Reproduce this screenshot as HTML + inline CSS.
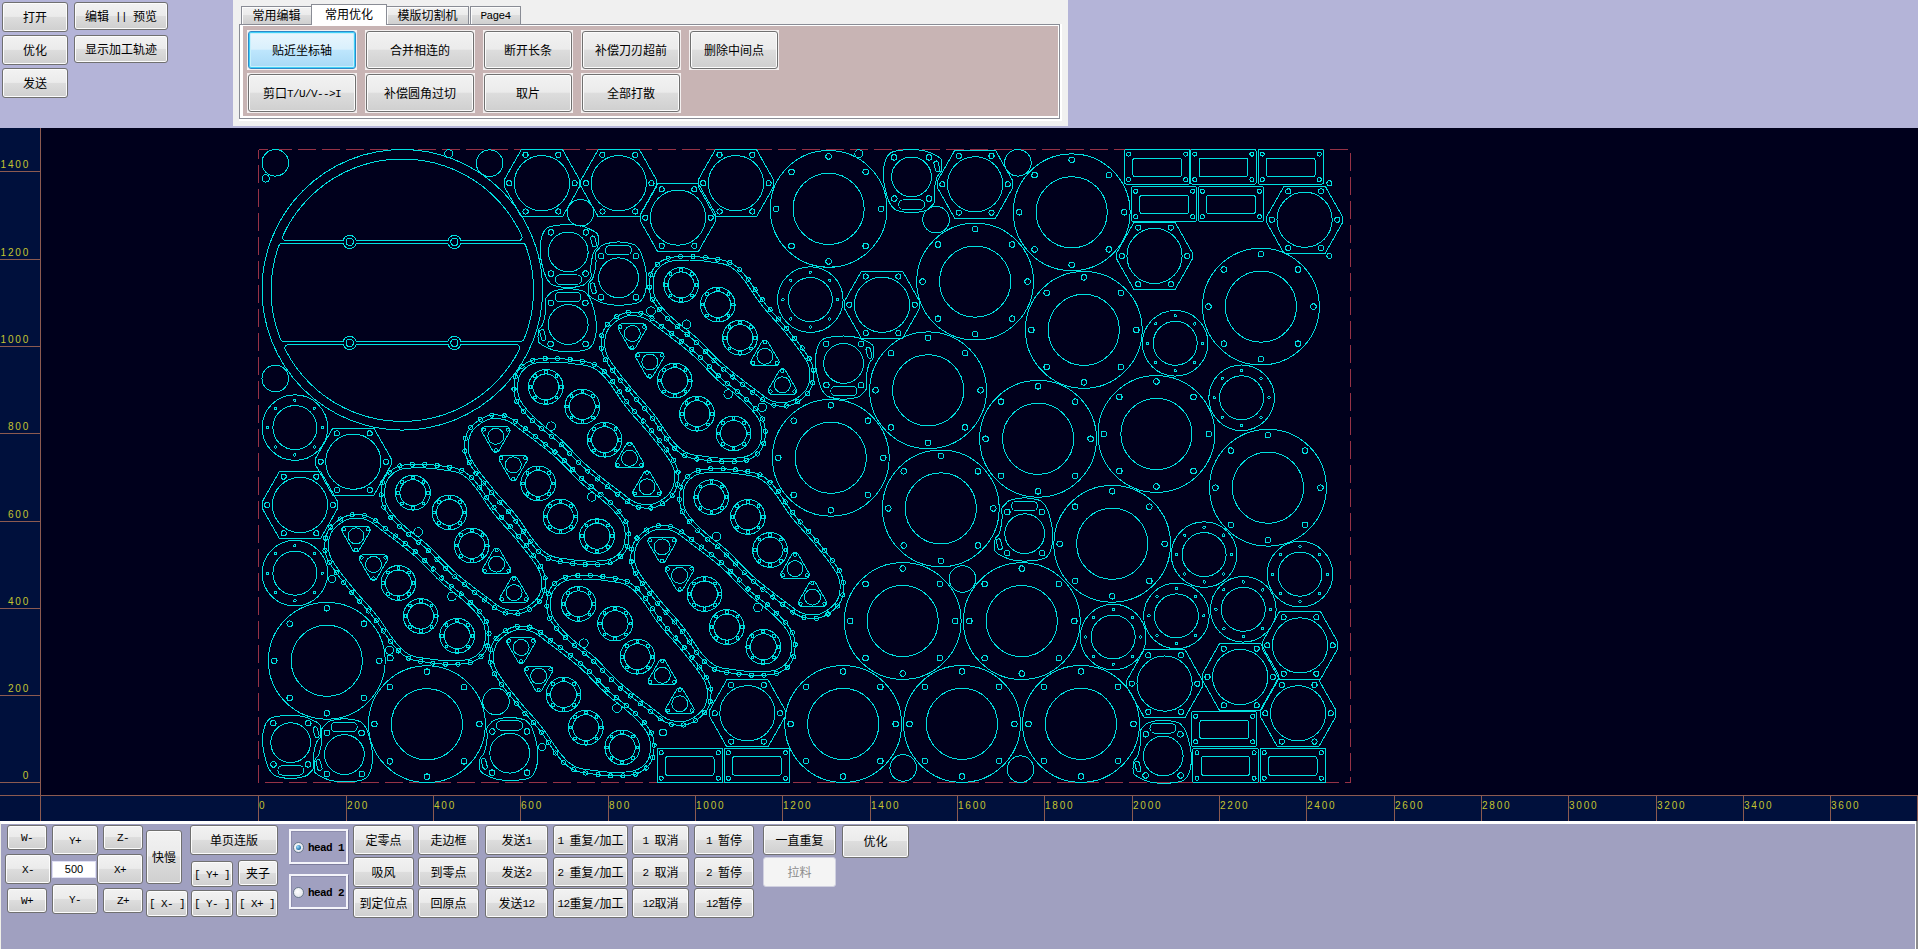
<!DOCTYPE html>
<html lang="zh"><head><meta charset="utf-8"><title>CAD</title>
<style>
*{box-sizing:border-box;margin:0;padding:0}
html,body{width:1918px;height:949px;overflow:hidden;background:#b4b4d8}
body{position:relative;font-family:"Liberation Serif","Noto Sans CJK SC","WenQuanYi Zen Hei",sans-serif;font-size:12px;color:#000}
.a{position:absolute}
.b{position:absolute;border:1px solid #707070;border-radius:3px;
 background:linear-gradient(#f2f2f2 0%,#ebebeb 48%,#dddddd 50%,#cfcfcf 100%);
 box-shadow:inset 0 0 0 1px #fcfcfc;display:flex;align-items:center;justify-content:center;white-space:pre;line-height:12px;padding-top:1px}
.b.sel{border-color:#2c89c8;background:linear-gradient(#eaf6fd 0%,#d9f0fc 48%,#bee6fd 50%,#a7d9f5 100%);box-shadow:inset 0 0 0 1px #40d0f8, inset 0 0 0 2px #c8f0fc}
.b.dis{border-color:#d0d0e0;background:#f4f4f4;color:#8c8c8c;box-shadow:none}
.fr{position:absolute;background:#f4f0f0}
.tab{position:absolute;border:1px solid #898c95;border-bottom:none;background:linear-gradient(#f2f2f2 0%,#ebebeb 48%,#dddddd 50%,#cfcfcf 100%);display:flex;align-items:center;justify-content:center;white-space:pre;line-height:12px;box-shadow:inset 1px 1px 0 #fcfcfc;padding-top:1px}
.tab.on{background:#fff;box-shadow:none}
.rl{position:absolute;font-family:"Liberation Sans",sans-serif;font-size:10px;line-height:10px;color:#c4c430;letter-spacing:1.8px;white-space:pre}
.lat{font-family:"Liberation Mono",monospace;font-size:11px;letter-spacing:-0.6px}
</style></head>
<body>
<div class="b " style="left:2px;top:2px;width:66px;height:30px;">打开</div>
<div class="b " style="left:2px;top:35px;width:66px;height:30px;">优化</div>
<div class="b " style="left:2px;top:68px;width:66px;height:30px;">发送</div>
<div class="b " style="left:74px;top:2px;width:94px;height:28px;">编辑<span class="lat"> || </span>预览</div>
<div class="b " style="left:74px;top:35px;width:94px;height:28px;">显示加工轨迹</div>
<div class="a" style="left:233px;top:0;width:835px;height:126px;background:#f0f0f0"></div>
<div class="a" style="left:239px;top:24px;width:823px;height:97px;background:#fff"></div>
<div class="a" style="left:239px;top:24px;width:821px;height:95px;border:1px solid #898c95;background:#fff"></div>
<div class="a" style="left:243px;top:26px;width:815px;height:90px;background:#c8b4b4"></div>
<div class="tab" style="left:241px;top:6px;width:71px;height:18px">常用编辑</div>
<div class="tab" style="left:386px;top:6px;width:83px;height:18px">模版切割机</div>
<div class="tab" style="left:470px;top:6px;width:51px;height:18px"><span class="lat">Page4</span></div>
<div class="tab on" style="left:311px;top:4px;width:76px;height:21px;padding-bottom:1px">常用优化</div>
<div class="fr" style="left:247px;top:30px;width:110px;height:40px"></div>
<div class="b sel" style="left:248px;top:31px;width:108px;height:38px;">贴近坐标轴</div>
<div class="fr" style="left:365px;top:30px;width:110px;height:40px"></div>
<div class="b " style="left:366px;top:31px;width:108px;height:38px;">合并相连的</div>
<div class="fr" style="left:483px;top:30px;width:90px;height:40px"></div>
<div class="b " style="left:484px;top:31px;width:88px;height:38px;">断开长条</div>
<div class="fr" style="left:581px;top:30px;width:100px;height:40px"></div>
<div class="b " style="left:582px;top:31px;width:98px;height:38px;">补偿刀刃超前</div>
<div class="fr" style="left:689px;top:30px;width:90px;height:40px"></div>
<div class="b " style="left:690px;top:31px;width:88px;height:38px;">删除中间点</div>
<div class="fr" style="left:247px;top:73px;width:110px;height:40px"></div>
<div class="b " style="left:248px;top:74px;width:108px;height:38px;">剪口<span class="lat">T/U/V--&gt;I</span></div>
<div class="fr" style="left:365px;top:73px;width:110px;height:40px"></div>
<div class="b " style="left:366px;top:74px;width:108px;height:38px;">补偿圆角过切</div>
<div class="fr" style="left:483px;top:73px;width:90px;height:40px"></div>
<div class="b " style="left:484px;top:74px;width:88px;height:38px;">取片</div>
<div class="fr" style="left:581px;top:73px;width:100px;height:40px"></div>
<div class="b " style="left:582px;top:74px;width:98px;height:38px;">全部打散</div>
<div class="a" style="left:0;top:128px;width:1918px;height:693px;background:#00001c"></div>
<div class="a" style="left:0;top:128px;width:41px;height:693px;background:#00103c;border-right:1px solid #8c5a50"></div>
<div class="a" style="left:0;top:795px;width:1918px;height:26px;background:#00103c;border-top:1px solid #8c5a50"></div>
<div class="a" style="left:40px;top:795px;width:1px;height:26px;background:#8c5a50"></div>
<div class="a" style="left:0;top:782px;width:40px;height:1px;background:#8c5a50"></div>
<div class="rl" style="right:1888px;top:771px;text-align:right">0</div>
<div class="a" style="left:0;top:695px;width:40px;height:1px;background:#8c5a50"></div>
<div class="rl" style="right:1888px;top:684px;text-align:right">200</div>
<div class="a" style="left:0;top:608px;width:40px;height:1px;background:#8c5a50"></div>
<div class="rl" style="right:1888px;top:597px;text-align:right">400</div>
<div class="a" style="left:0;top:521px;width:40px;height:1px;background:#8c5a50"></div>
<div class="rl" style="right:1888px;top:510px;text-align:right">600</div>
<div class="a" style="left:0;top:433px;width:40px;height:1px;background:#8c5a50"></div>
<div class="rl" style="right:1888px;top:422px;text-align:right">800</div>
<div class="a" style="left:0;top:346px;width:40px;height:1px;background:#8c5a50"></div>
<div class="rl" style="right:1888px;top:335px;text-align:right">1000</div>
<div class="a" style="left:0;top:259px;width:40px;height:1px;background:#8c5a50"></div>
<div class="rl" style="right:1888px;top:248px;text-align:right">1200</div>
<div class="a" style="left:0;top:171px;width:40px;height:1px;background:#8c5a50"></div>
<div class="rl" style="right:1888px;top:160px;text-align:right">1400</div>
<div class="a" style="left:258px;top:796px;width:1px;height:25px;background:#8c5a50"></div>
<div class="rl" style="left:259px;top:801px">0</div>
<div class="a" style="left:346px;top:796px;width:1px;height:25px;background:#8c5a50"></div>
<div class="rl" style="left:347px;top:801px">200</div>
<div class="a" style="left:433px;top:796px;width:1px;height:25px;background:#8c5a50"></div>
<div class="rl" style="left:434px;top:801px">400</div>
<div class="a" style="left:520px;top:796px;width:1px;height:25px;background:#8c5a50"></div>
<div class="rl" style="left:521px;top:801px">600</div>
<div class="a" style="left:608px;top:796px;width:1px;height:25px;background:#8c5a50"></div>
<div class="rl" style="left:609px;top:801px">800</div>
<div class="a" style="left:695px;top:796px;width:1px;height:25px;background:#8c5a50"></div>
<div class="rl" style="left:696px;top:801px">1000</div>
<div class="a" style="left:782px;top:796px;width:1px;height:25px;background:#8c5a50"></div>
<div class="rl" style="left:783px;top:801px">1200</div>
<div class="a" style="left:870px;top:796px;width:1px;height:25px;background:#8c5a50"></div>
<div class="rl" style="left:871px;top:801px">1400</div>
<div class="a" style="left:957px;top:796px;width:1px;height:25px;background:#8c5a50"></div>
<div class="rl" style="left:958px;top:801px">1600</div>
<div class="a" style="left:1044px;top:796px;width:1px;height:25px;background:#8c5a50"></div>
<div class="rl" style="left:1045px;top:801px">1800</div>
<div class="a" style="left:1132px;top:796px;width:1px;height:25px;background:#8c5a50"></div>
<div class="rl" style="left:1133px;top:801px">2000</div>
<div class="a" style="left:1219px;top:796px;width:1px;height:25px;background:#8c5a50"></div>
<div class="rl" style="left:1220px;top:801px">2200</div>
<div class="a" style="left:1306px;top:796px;width:1px;height:25px;background:#8c5a50"></div>
<div class="rl" style="left:1307px;top:801px">2400</div>
<div class="a" style="left:1394px;top:796px;width:1px;height:25px;background:#8c5a50"></div>
<div class="rl" style="left:1395px;top:801px">2600</div>
<div class="a" style="left:1481px;top:796px;width:1px;height:25px;background:#8c5a50"></div>
<div class="rl" style="left:1482px;top:801px">2800</div>
<div class="a" style="left:1568px;top:796px;width:1px;height:25px;background:#8c5a50"></div>
<div class="rl" style="left:1569px;top:801px">3000</div>
<div class="a" style="left:1656px;top:796px;width:1px;height:25px;background:#8c5a50"></div>
<div class="rl" style="left:1657px;top:801px">3200</div>
<div class="a" style="left:1743px;top:796px;width:1px;height:25px;background:#8c5a50"></div>
<div class="rl" style="left:1744px;top:801px">3400</div>
<div class="a" style="left:1830px;top:796px;width:1px;height:25px;background:#8c5a50"></div>
<div class="rl" style="left:1831px;top:801px">3600</div>
<svg class="a" style="left:0;top:0" width="1918" height="949" viewBox="0 0 1918 949">
<defs>
<g id="hex"><path d="M37.9 -3 L37.9 3 L20.5 33.7 L-20.5 33.7 L-37.9 3 L-37.9 -3 L-20.5 -33.7 L20.5 -33.7Z"/><circle cx="0" cy="0" r="27.6"/><circle cx="32.7" cy="0" r="2.6"/><circle cx="16.4" cy="28.3" r="2.6"/><circle cx="-16.3" cy="28.3" r="2.6"/><circle cx="-32.7" cy="0" r="2.6"/><circle cx="-16.4" cy="-28.3" r="2.6"/><circle cx="16.4" cy="-28.3" r="2.6"/></g>
<g id="ear"><path d="M-28.2 -1 L-28.2 -5.3 L-27.7 -9.3 L-27 -13 L-26 -16.4 L-24.7 -19.5 L-23 -22 L-21.2 -23.7 L-19.1 -24.9 L-16 -25.8 L-11.3 -26.6 L-5.5 -27.2 L0 -27.4 L5 -27.2 L9.8 -26.6 L14 -25.8 L17.5 -24.6 L20.5 -23.3 L23 -22 L24.9 -21.1 L26.3 -20.4 L27.5 -19.5 L28.6 -18.6 L29.5 -17.6 L30 -15.8 L30.2 -12.6 L30.1 -8.8 L29.6 -5.5 L28.6 -3.7 L27.2 -2.5 L26 -0.8 L25 1.8 L24.2 4.9 L23.5 8 L23 11 L22.7 14.1 L22.5 17 L22.7 19.9 L23 22.6 L22.9 25 L22 26.9 L20.5 28.5 L19 30 L17.8 31.4 L16.5 32.5 L14.2 33.6 L10.2 34.6 L5.1 35.5 L0 35.9 L-5.1 35.5 L-10.2 34.6 L-14.2 33.6 L-16.5 32.6 L-17.8 31.4 L-19 30 L-20.3 28.5 L-21.4 26.8 L-22.5 24.5 L-23.7 21.3 L-24.9 17.6 L-26 13.4 L-27 8.8 L-27.8 3.7Z"/><circle cx="0" cy="0" r="19.9"/><circle cx="-17.4" cy="-19.5" r="2.8"/><circle cx="17.6" cy="-19.5" r="2.8"/><circle cx="-17.2" cy="21.7" r="2.8"/><circle cx="17.4" cy="21.7" r="2.8"/><rect x="-12.8" y="23" width="26" height="9.4" rx="4.5"/><rect x="23.2" y="-16" width="4.4" height="11" rx="2.2" transform="rotate(-14 25.4 -10.5)"/></g>
<g id="sfl"><circle cx="0" cy="0" r="32.8"/><circle cx="0" cy="0" r="22"/><circle cx="27.4" cy="0" r="1.2"/><circle cx="19.4" cy="19.4" r="1.2"/><circle cx="0" cy="27.4" r="1.2"/><circle cx="-19.4" cy="19.4" r="1.2"/><circle cx="-27.4" cy="0" r="1.2"/><circle cx="-19.4" cy="-19.4" r="1.2"/><circle cx="0" cy="-27.4" r="1.2"/><circle cx="19.4" cy="-19.4" r="1.2"/></g>
<g id="r8"><circle cx="0" cy="0" r="58.4"/><circle cx="0" cy="0" r="35.6"/><circle cx="0" cy="52.5" r="2.8"/><circle cx="-37.1" cy="37.1" r="2.8"/><circle cx="-52.5" cy="0" r="2.8"/><circle cx="-37.1" cy="-37.1" r="2.8"/><circle cx="0" cy="-52.5" r="2.8"/><circle cx="37.1" cy="-37.1" r="2.8"/><circle cx="52.5" cy="0" r="2.8"/><circle cx="37.1" cy="37.1" r="2.8"/></g>
<g id="rg"><rect x="0" y="0" width="65.5" height="34.5" rx="1.5"/><rect x="8.5" y="8.5" width="48.5" height="18.5" rx="2"/><circle cx="4.2" cy="4.5" r="2"/><circle cx="61.3" cy="4.5" r="2"/><circle cx="4.2" cy="30" r="2"/><circle cx="61.3" cy="30" r="2"/></g>
<g id="ring"><circle cx="0" cy="0" r="17.4"/><circle cx="0" cy="0" r="13"/><rect x="-1.3" y="13.9" width="2.6" height="2.6"/><rect x="-12" y="9.4" width="2.6" height="2.6"/><rect x="-16.5" y="-1.3" width="2.6" height="2.6"/><rect x="-12" y="-12" width="2.6" height="2.6"/><rect x="-1.3" y="-16.5" width="2.6" height="2.6"/><rect x="9.4" y="-12" width="2.6" height="2.6"/><rect x="13.9" y="-1.3" width="2.6" height="2.6"/><rect x="9.4" y="9.4" width="2.6" height="2.6"/></g>
<g id="tri"><path d="M3.1 -14 L2.1 -15.1 L0.7 -15.7 L-0.7 -15.7 L-2.1 -15.1 L-3.1 -14 L-13.8 4.5 L-14.3 5.9 L-14.1 7.4 L-13.4 8.7 L-12.2 9.6 L-10.7 9.9 L10.7 9.9 L12.2 9.6 L13.4 8.7 L14.1 7.4 L14.3 5.9 L13.8 4.5Z"/><circle cx="0" cy="0.3" r="8"/><circle cx="0" cy="-13.6" r="1.6"/><circle cx="11.9" cy="7" r="1.6"/><circle cx="-11.9" cy="7" r="1.6"/></g>
<g id="cg"><path d="M-82.2 -53.8 L-81.8 -56.2 L-81.4 -58.5 L-80.8 -60.7 L-80 -62.8 L-79 -64.9 L-77.7 -66.8 L-76.1 -68.7 L-74.3 -70.5 L-72.2 -72.2 L-70 -73.8 L-67.4 -75.2 L-64.7 -76.3 L-61.5 -77.1 L-58 -77.7 L-54.2 -78 L-50.3 -78.2 L-46.4 -78.3 L-42.6 -78.3 L-38.9 -78.2 L-35.2 -78 L-31.4 -77.7 L-27.7 -77.3 L-24.1 -76.8 L-20.6 -76.3 L-17.3 -75.8 L-14 -75.4 L-10.9 -74.9 L-7.8 -74.3 L-4.8 -73.4 L-1.9 -72.2 L0.7 -70.8 L3.2 -69.2 L5.5 -67.3 L7.8 -65.2 L10.3 -62.6 L13.1 -59.5 L16 -55.7 L19.1 -51.3 L22.4 -46.5 L25.8 -41.4 L29.2 -36.4 L32.8 -31.7 L36.4 -27.2 L40.3 -22.8 L44.3 -18.3 L48.3 -13.9 L52.2 -9.5 L55.9 -5 L59.8 -0.3 L63.7 4.6 L67.5 9.5 L71.1 14.3 L74.3 18.8 L76.8 22.8 L78.7 26.3 L80.1 29.4 L81 32.1 L81.5 34.8 L81.8 37.4 L81.8 40.2 L81.7 43.2 L81.4 46.2 L80.8 49.2 L79.8 52.1 L78.5 55 L76.8 57.6 L74.7 60.1 L72 62.7 L69 65.1 L65.8 67.2 L62.6 69 L59.4 70.3 L56.1 71.1 L52.8 71.5 L49.4 71.5 L46 71.2 L42.6 70.6 L39.4 69.7 L36.4 68.5 L33.7 67 L31 65.2 L28.2 63.1 L25 60.5 L21.1 57.6 L16.5 54.1 L11.1 50.1 L5.4 45.7 L-0.4 41.1 L-6.1 36.5 L-11.2 32.1 L-16 27.7 L-20.5 23.2 L-24.9 18.7 L-29 14.3 L-33 10.2 L-36.8 6.6 L-40.3 3.5 L-43.6 0.8 L-46.7 -1.6 L-49.6 -3.9 L-52.5 -6.1 L-55.4 -8.5 L-58.2 -10.9 L-60.9 -13.3 L-63.5 -15.7 L-66.1 -18 L-68.4 -20.4 L-70.7 -22.8 L-72.7 -25.2 L-74.7 -27.7 L-76.5 -30.2 L-78.1 -32.7 L-79.5 -35.2 L-80.7 -37.8 L-81.5 -40.4 L-82 -43.2 L-82.3 -45.9 L-82.4 -48.7 L-82.3 -51.3Z"/><path d="M-78.6 -53.4 L-78.7 -51.1 L-78.8 -48.7 L-78.7 -46.2 L-78.4 -43.7 L-78 -41.3 L-77.3 -39 L-76.3 -36.8 L-75.1 -34.6 L-73.6 -32.2 L-71.8 -29.9 L-69.9 -27.5 L-67.9 -25.2 L-65.8 -22.9 L-63.6 -20.6 L-61.1 -18.3 L-58.5 -16 L-55.8 -13.6 L-53 -11.2 L-50.3 -9 L-47.5 -6.8 L-44.5 -4.5 L-44.5 -4.5 L-41.4 -2.1 L-41.3 -2 L-38 0.7 L-37.9 0.8 L-34.4 3.9 L-34.2 4 L-30.5 7.7 L-30.4 7.7 L-26.4 11.8 L-26.4 11.8 L-22.3 16.2 L-17.9 20.7 L-13.5 25.1 L-8.9 29.4 L-3.8 33.7 L1.8 38.3 L7.6 42.8 L13.3 47.2 L18.7 51.2 L23.3 54.7 L23.3 54.7 L27.2 57.7 L27.2 57.7 L30.4 60.2 L33.1 62.3 L35.6 63.9 L37.9 65.2 L40.5 66.3 L43.4 67.1 L46.5 67.7 L49.5 67.9 L52.6 67.9 L55.5 67.6 L58.2 66.9 L61 65.7 L64 64.1 L66.9 62.2 L69.7 60 L72.1 57.7 L73.9 55.5 L75.4 53.2 L76.4 50.8 L77.3 48.3 L77.8 45.6 L78.1 42.9 L78.2 40.2 L78.2 37.6 L77.9 35.3 L77.5 33.1 L76.7 30.7 L75.5 27.9 L73.7 24.6 L71.3 20.8 L68.2 16.4 L64.7 11.7 L60.9 6.8 L56.9 2 L53.2 -2.7 L49.4 -7.2 L45.6 -11.5 L41.6 -15.9 L41.6 -15.9 L37.6 -20.4 L37.6 -20.4 L33.7 -24.8 L33.7 -24.9 L30 -29.4 L29.9 -29.5 L26.3 -34.3 L26.2 -34.4 L22.8 -39.4 L22.8 -39.4 L19.4 -44.5 L16.2 -49.3 L13.1 -53.6 L10.3 -57.2 L7.7 -60.1 L5.3 -62.6 L3.2 -64.6 L1.1 -66.2 L-1.1 -67.7 L-3.5 -69 L-6 -70 L-8.7 -70.8 L-11.5 -71.4 L-14.5 -71.8 L-17.8 -72.3 L-17.8 -72.3 L-21.1 -72.7 L-21.2 -72.7 L-24.6 -73.2 L-28.2 -73.7 L-31.8 -74.1 L-35.5 -74.4 L-39.1 -74.6 L-42.7 -74.7 L-46.4 -74.7 L-50.2 -74.6 L-54 -74.4 L-57.5 -74.1 L-60.8 -73.6 L-63.5 -72.9 L-65.9 -71.9 L-68.1 -70.7 L-70 -69.4 L-71.8 -67.9 L-73.4 -66.3 L-74.8 -64.6 L-75.9 -63 L-76.7 -61.4 L-77.4 -59.6 L-77.9 -57.7 L-78.3 -55.6Z"/><circle cx="-81" cy="-59.9" r="2.1"/><circle cx="-74.4" cy="-70.4" r="2.1"/><circle cx="-63.7" cy="-76.5" r="2.1"/><circle cx="-51.3" cy="-78.2" r="2.1"/><circle cx="-38.8" cy="-78.2" r="2.1"/><circle cx="-26.3" cy="-77.1" r="2.1"/><circle cx="-14" cy="-75.4" r="2.1"/><circle cx="-1.9" cy="-72.2" r="2.1"/><circle cx="8.1" cy="-64.9" r="2.1"/><circle cx="16.3" cy="-55.4" r="2.1"/><circle cx="23.3" cy="-45" r="2.1"/><circle cx="30.5" cy="-34.8" r="2.1"/><circle cx="38.3" cy="-25" r="2.1"/><circle cx="46.7" cy="-15.7" r="2.1"/><circle cx="54.9" cy="-6.3" r="2.1"/><circle cx="62.8" cy="3.4" r="2.1"/><circle cx="70.4" cy="13.3" r="2.1"/><circle cx="77.3" cy="23.7" r="2.1"/><circle cx="81.6" cy="35.4" r="2.1"/><circle cx="81" cy="47.9" r="2.1"/><circle cx="75.7" cy="59" r="2.1"/><circle cx="66.1" cy="67" r="2.1"/><circle cx="54.5" cy="71.3" r="2.1"/><circle cx="42.1" cy="70.5" r="2.1"/><circle cx="30.9" cy="65.1" r="2.1"/><circle cx="21" cy="57.5" r="2.1"/><circle cx="11" cy="50" r="2.1"/><circle cx="1.1" cy="42.3" r="2.1"/><circle cx="-8.6" cy="34.4" r="2.1"/><circle cx="-17.8" cy="25.9" r="2.1"/><circle cx="-26.5" cy="17" r="2.1"/><circle cx="-35.3" cy="8" r="2.1"/><circle cx="-44.7" cy="-0.1" r="2.1"/><circle cx="-54.6" cy="-7.9" r="2.1"/><circle cx="-64" cy="-16.1" r="2.1"/><circle cx="-72.6" cy="-25.1" r="2.1"/><circle cx="-79.6" cy="-35.4" r="2.1"/><circle cx="-82.4" cy="-47.6" r="2.1"/><circle cx="-45.3" cy="-10.5" r="4.3"/><use href="#ring" x="-50.6" y="-49.8"/><use href="#ring" x="-14.1" y="-30.1"/><use href="#ring" x="8.2" y="3"/><use href="#tri" x="33.1" y="21.3"/><use href="#tri" x="50.6" y="49.8"/></g>
</defs>
<g fill="none" stroke="#963246" stroke-width="1" stroke-dasharray="18 6" stroke-dashoffset="9" shape-rendering="crispEdges"><path d="M258.5 149.5H1350.5V782.5"/><path d="M258.5 149.5V782.5H1350.5"/></g>
<g fill="none" stroke="#00e0e0" stroke-width="1" shape-rendering="crispEdges">
<circle cx="402.3" cy="289.8" r="140.3"/>
<path d="M283 239 L283.4 239.6 L284 240 L284.7 240.3 L285.5 240.4 L343.3 240.4 L343.3 240.2 L344 238.6 L345 237.2 L346.4 236.2 L348 235.5 L349.7 235.3 L351.4 235.5 L353 236.2 L354.4 237.2 L355.4 238.6 L356.1 240.2 L356.1 240.4 L448 240.4 L448 240.2 L448.7 238.6 L449.7 237.2 L451.1 236.2 L452.7 235.5 L454.4 235.3 L456.1 235.5 L457.7 236.2 L459.1 237.2 L460.1 238.6 L460.8 240.2 L460.8 240.4 L519.1 240.4 L519.9 240.3 L520.6 240 L521.2 239.6 L521.6 239 L522 238.3 L522.1 237.6 L522.1 236.9 L521.8 236.2 L520.9 234.1 L520.9 234.1 L519.5 231.2 L519.5 231.2 L518 228.4 L518 228.3 L516.5 225.6 L516.4 225.5 L514.9 222.8 L514.8 222.7 L513.2 220 L513.1 220 L511.4 217.3 L511.4 217.3 L509.6 214.7 L509.5 214.6 L507.7 212.1 L507.7 212 L505.8 209.5 L505.7 209.5 L503.7 207 L503.7 206.9 L501.7 204.5 L501.6 204.5 L499.5 202.1 L499.5 202.1 L497.3 199.8 L497.3 199.7 L495.1 197.5 L495 197.4 L492.8 195.2 L492.7 195.2 L490.4 193 L490.4 193 L488 190.9 L488 190.8 L485.6 188.8 L485.5 188.8 L483 186.8 L483 186.7 L480.5 184.8 L480.4 184.8 L477.9 183 L477.8 182.9 L475.2 181.1 L475.2 181.1 L472.5 179.4 L472.5 179.3 L469.8 177.7 L469.7 177.6 L467 176.1 L466.9 176 L464.2 174.5 L464.1 174.5 L461.3 173 L461.3 173 L458.4 171.6 L458.4 171.6 L455.5 170.3 L455.4 170.2 L452.5 169 L452.5 169 L449.6 167.8 L449.5 167.8 L446.5 166.7 L446.5 166.7 L443.5 165.6 L443.4 165.6 L440.4 164.7 L440.3 164.6 L437.3 163.8 L437.3 163.7 L434.2 162.9 L434.1 162.9 L431.1 162.2 L431 162.2 L427.9 161.5 L427.9 161.5 L424.8 160.9 L424.7 160.9 L421.6 160.4 L421.5 160.4 L418.4 160 L418.3 160 L415.2 159.6 L415.1 159.6 L412 159.4 L411.9 159.4 L408.8 159.2 L408.7 159.2 L405.6 159 L405.5 159 L402.3 159 L402.3 159 L399.1 159 L399 159 L395.9 159.2 L395.8 159.2 L392.7 159.4 L392.6 159.4 L389.5 159.6 L389.4 159.6 L386.3 160 L386.2 160 L383.1 160.4 L383 160.4 L379.9 160.9 L379.8 160.9 L376.7 161.5 L376.7 161.5 L373.6 162.2 L373.5 162.2 L370.5 162.9 L370.4 162.9 L367.3 163.7 L367.3 163.8 L364.3 164.6 L364.2 164.7 L361.2 165.6 L361.1 165.6 L358.1 166.7 L358.1 166.7 L355.1 167.8 L355 167.8 L352.1 169 L352.1 169 L349.2 170.2 L349.1 170.3 L346.2 171.6 L346.2 171.6 L343.3 173 L343.3 173 L340.5 174.5 L340.4 174.5 L337.7 176 L337.6 176.1 L334.9 177.6 L334.8 177.7 L332.1 179.3 L332.1 179.4 L329.4 181.1 L329.4 181.1 L326.8 182.9 L326.7 183 L324.2 184.8 L324.1 184.8 L321.6 186.7 L321.6 186.8 L319.1 188.8 L319 188.8 L316.6 190.8 L316.6 190.9 L314.2 193 L314.2 193 L311.9 195.2 L311.8 195.2 L309.6 197.4 L309.5 197.5 L307.3 199.7 L307.3 199.8 L305.1 202.1 L305.1 202.1 L303 204.5 L302.9 204.5 L300.9 206.9 L300.9 207 L298.9 209.5 L298.8 209.5 L296.9 212 L296.9 212.1 L295.1 214.6 L295 214.7 L293.2 217.3 L293.2 217.3 L291.5 220 L291.4 220 L289.8 222.7 L289.7 222.8 L288.2 225.5 L288.1 225.6 L286.6 228.3 L286.6 228.4 L285.1 231.2 L285.1 231.2 L283.7 234.1 L283.7 234.1 L282.8 236.2 L282.5 236.9 L282.5 237.6 L282.6 238.3Z"/>
<path d="M282.7 341.1 L283.4 341.2 L343.3 341.2 L343.3 341.2 L344 339.6 L345 338.2 L346.4 337.2 L348 336.5 L349.7 336.3 L351.4 336.5 L353 337.2 L354.4 338.2 L355.4 339.6 L356.1 341.2 L356.1 341.2 L448 341.2 L448 341.2 L448.7 339.6 L449.7 338.2 L451.1 337.2 L452.7 336.5 L454.4 336.3 L456.1 336.5 L457.7 337.2 L459.1 338.2 L460.1 339.6 L460.8 341.2 L460.8 341.2 L521.2 341.2 L521.9 341.1 L522.5 340.9 L523.1 340.5 L523.6 339.9 L524 339.3 L524.7 337.5 L524.7 337.4 L525.8 334.4 L525.8 334.4 L526.9 331.4 L526.9 331.3 L527.8 328.3 L527.9 328.2 L528.7 325.2 L528.8 325.2 L529.6 322.1 L529.6 322 L530.3 319 L530.3 318.9 L531 315.8 L531 315.8 L531.6 312.7 L531.6 312.6 L532.1 309.5 L532.1 309.4 L532.5 306.3 L532.5 306.2 L532.9 303.1 L532.9 303 L533.1 299.9 L533.1 299.8 L533.3 296.7 L533.3 296.6 L533.5 293.5 L533.5 293.4 L533.5 290.2 L533.5 290.2 L533.5 287 L533.5 286.9 L533.3 283.8 L533.3 283.7 L533.1 280.6 L533.1 280.5 L532.9 277.4 L532.9 277.3 L532.5 274.2 L532.5 274.1 L532.1 271 L532.1 270.9 L531.6 267.8 L531.6 267.7 L531 264.6 L531 264.6 L530.3 261.5 L530.3 261.4 L529.6 258.4 L529.6 258.3 L528.8 255.2 L528.7 255.2 L527.9 252.2 L527.8 252.1 L526.9 249.1 L526.9 249 L525.8 246 L525.8 246 L525.7 245.6 L525.3 244.9 L524.9 244.4 L524.3 243.9 L523.6 243.7 L522.9 243.6 L460.8 243.6 L460.8 243.6 L460.1 245.2 L459.1 246.6 L457.7 247.6 L456.1 248.3 L454.4 248.5 L452.7 248.3 L451.1 247.6 L449.7 246.6 L448.7 245.2 L448 243.6 L448 243.6 L356.1 243.6 L356.1 243.6 L355.4 245.2 L354.4 246.6 L353 247.6 L351.4 248.3 L349.7 248.5 L348 248.3 L346.4 247.6 L345 246.6 L344 245.2 L343.3 243.6 L343.3 243.6 L281.7 243.6 L281 243.7 L280.3 243.9 L279.7 244.4 L279.3 244.9 L278.9 245.6 L278.8 246 L278.8 246 L277.7 249 L277.7 249.1 L276.8 252.1 L276.7 252.2 L275.9 255.2 L275.8 255.2 L275 258.3 L275 258.4 L274.3 261.4 L274.3 261.5 L273.6 264.6 L273.6 264.6 L273 267.7 L273 267.8 L272.5 270.9 L272.5 271 L272.1 274.1 L272.1 274.2 L271.7 277.3 L271.7 277.4 L271.5 280.5 L271.5 280.6 L271.3 283.7 L271.3 283.8 L271.1 286.9 L271.1 287 L271.1 290.2 L271.1 290.2 L271.1 293.4 L271.1 293.5 L271.3 296.6 L271.3 296.7 L271.5 299.8 L271.5 299.9 L271.7 303 L271.7 303.1 L272.1 306.2 L272.1 306.3 L272.5 309.4 L272.5 309.5 L273 312.6 L273 312.7 L273.6 315.8 L273.6 315.8 L274.3 318.9 L274.3 319 L275 322 L275 322.1 L275.8 325.2 L275.9 325.2 L276.7 328.2 L276.8 328.3 L277.7 331.3 L277.7 331.4 L278.8 334.4 L278.8 334.4 L279.9 337.4 L279.9 337.5 L280.6 339.3 L281 339.9 L281.5 340.5 L282.1 340.9Z"/>
<path d="M285.2 346.2 L284.9 346.9 L284.8 347.6 L284.8 348.4 L285.1 349.1 L285.1 349.2 L285.1 349.2 L286.6 352 L286.6 352.1 L288.1 354.8 L288.2 354.9 L289.7 357.6 L289.8 357.7 L291.4 360.4 L291.5 360.4 L293.2 363.1 L293.2 363.1 L295 365.7 L295.1 365.8 L296.9 368.3 L296.9 368.4 L298.8 370.9 L298.9 370.9 L300.9 373.4 L300.9 373.5 L302.9 375.9 L303 375.9 L305.1 378.3 L305.1 378.3 L307.3 380.6 L307.3 380.7 L309.5 382.9 L309.6 383 L311.8 385.2 L311.9 385.2 L314.2 387.4 L314.2 387.4 L316.6 389.5 L316.6 389.6 L319 391.6 L319.1 391.6 L321.6 393.6 L321.6 393.7 L324.1 395.6 L324.2 395.6 L326.7 397.4 L326.8 397.5 L329.4 399.3 L329.4 399.3 L332.1 401 L332.1 401.1 L334.8 402.7 L334.9 402.8 L337.6 404.3 L337.7 404.4 L340.4 405.9 L340.5 405.9 L343.3 407.4 L343.3 407.4 L346.2 408.8 L346.2 408.8 L349.1 410.1 L349.2 410.2 L352.1 411.4 L352.1 411.4 L355 412.6 L355.1 412.6 L358.1 413.7 L358.1 413.7 L361.1 414.8 L361.2 414.8 L364.2 415.7 L364.3 415.8 L367.3 416.6 L367.3 416.7 L370.4 417.5 L370.5 417.5 L373.5 418.2 L373.6 418.2 L376.7 418.9 L376.7 418.9 L379.8 419.5 L379.9 419.5 L383 420 L383.1 420 L386.2 420.4 L386.3 420.4 L389.4 420.8 L389.5 420.8 L392.6 421 L392.7 421 L395.8 421.2 L395.9 421.2 L399 421.4 L399.1 421.4 L402.3 421.4 L402.3 421.4 L405.5 421.4 L405.6 421.4 L408.7 421.2 L408.8 421.2 L411.9 421 L412 421 L415.1 420.8 L415.2 420.8 L418.3 420.4 L418.4 420.4 L421.5 420 L421.6 420 L424.7 419.5 L424.8 419.5 L427.9 418.9 L427.9 418.9 L431 418.2 L431.1 418.2 L434.1 417.5 L434.2 417.5 L437.3 416.7 L437.3 416.6 L440.3 415.8 L440.4 415.7 L443.4 414.8 L443.5 414.8 L446.5 413.7 L446.5 413.7 L449.5 412.6 L449.6 412.6 L452.5 411.4 L452.5 411.4 L455.4 410.2 L455.5 410.1 L458.4 408.8 L458.4 408.8 L461.3 407.4 L461.3 407.4 L464.1 405.9 L464.2 405.9 L466.9 404.4 L467 404.3 L469.7 402.8 L469.8 402.7 L472.5 401.1 L472.5 401 L475.2 399.3 L475.2 399.3 L477.8 397.5 L477.9 397.4 L480.4 395.6 L480.5 395.6 L483 393.7 L483 393.6 L485.5 391.6 L485.6 391.6 L488 389.6 L488 389.5 L490.4 387.4 L490.4 387.4 L492.7 385.2 L492.8 385.2 L495 383 L495.1 382.9 L497.3 380.7 L497.3 380.6 L499.5 378.3 L499.5 378.3 L501.6 375.9 L501.7 375.9 L503.7 373.5 L503.7 373.4 L505.7 370.9 L505.8 370.9 L507.7 368.4 L507.7 368.3 L509.5 365.8 L509.6 365.7 L511.4 363.1 L511.4 363.1 L513.1 360.4 L513.2 360.4 L514.8 357.7 L514.9 357.6 L516.4 354.9 L516.5 354.8 L518 352.1 L518 352 L519.5 349.2 L519.5 349.2 L519.5 349.1 L519.8 348.4 L519.8 347.6 L519.7 346.9 L519.4 346.2 L518.9 345.6 L518.3 345.2 L517.6 344.9 L516.8 344.8 L460.7 344.8 L460.1 346.2 L459.1 347.6 L457.7 348.6 L456.1 349.3 L454.4 349.5 L452.7 349.3 L451.1 348.6 L449.7 347.6 L448.7 346.2 L448.1 344.8 L356 344.8 L355.4 346.2 L354.4 347.6 L353 348.6 L351.4 349.3 L349.7 349.5 L348 349.3 L346.4 348.6 L345 347.6 L344 346.2 L343.4 344.8 L287.8 344.8 L287 344.9 L286.3 345.2 L285.7 345.6Z"/>
<circle cx="349.7" cy="241.9" r="3.6"/>
<circle cx="349.7" cy="342.9" r="3.6"/>
<circle cx="454.4" cy="241.9" r="3.6"/>
<circle cx="454.4" cy="342.9" r="3.6"/>
<circle cx="275.3" cy="162.8" r="13.3"/>
<circle cx="489.6" cy="163.2" r="13.3"/>
<circle cx="580.5" cy="212.7" r="13.3"/>
<circle cx="936.1" cy="219.7" r="13.3"/>
<circle cx="1017.9" cy="162.8" r="13.3"/>
<circle cx="275.3" cy="378.5" r="13.3"/>
<circle cx="962.5" cy="579" r="13.3"/>
<circle cx="903.2" cy="767.9" r="13.3"/>
<circle cx="1020.5" cy="769.2" r="13.3"/>
<circle cx="496" cy="701.5" r="13.3"/>
<circle cx="265.8" cy="178.4" r="3.7"/>
<circle cx="448.7" cy="153.7" r="4"/>
<circle cx="858.8" cy="153.7" r="4"/>
<circle cx="331.9" cy="578.9" r="3.5"/>
<circle cx="389.4" cy="650.3" r="4"/>
<circle cx="390.2" cy="658" r="3"/>
<circle cx="542.1" cy="747" r="3.5"/>
<circle cx="663" cy="732.5" r="3.5"/>
<circle cx="1329.4" cy="183.2" r="2.5"/>
<circle cx="1329.4" cy="255.9" r="2.5"/>
<circle cx="651" cy="311.1" r="4.3"/>
<circle cx="762.2" cy="407.3" r="4.3"/>
<use href="#hex" x="541.9" y="183.2"/>
<use href="#hex" x="618.8" y="183.2"/>
<use href="#hex" x="678" y="217.6"/>
<use href="#hex" x="735.9" y="183.2"/>
<use href="#hex" x="975.1" y="184.3"/>
<use href="#hex" x="882" y="304.8"/>
<use href="#hex" x="1154.5" y="255.9"/>
<use href="#hex" x="1304.6" y="219.7"/>
<use href="#hex" x="353.3" y="461.7"/>
<use href="#hex" x="300" y="505"/>
<use href="#hex" x="747.4" y="713.3"/>
<use href="#hex" x="1164.6" y="683.6"/>
<use href="#hex" x="1240.2" y="677"/>
<use href="#hex" x="1300" y="645.4"/>
<use href="#hex" x="1298.1" y="713.3"/>
<use href="#ear" x="568.2" y="251.9"/>
<use href="#ear" transform="translate(618.6 277.8) rotate(180)"/>
<use href="#ear" transform="translate(568.2 324.5) rotate(180)"/>
<use href="#ear" x="911.5" y="176.9"/>
<use href="#ear" x="843.6" y="363.4"/>
<use href="#ear" transform="translate(1024.7 533.7) rotate(180)"/>
<use href="#ear" x="290.7" y="742.7"/>
<use href="#ear" transform="translate(344.4 754.6) rotate(180)"/>
<use href="#ear" transform="translate(509.7 753.2) rotate(180)"/>
<use href="#ear" transform="translate(1163.2 756) rotate(180)"/>
<use href="#sfl" x="810.3" y="299.6"/>
<use href="#sfl" x="294.9" y="427.6"/>
<use href="#sfl" x="294.9" y="573.2"/>
<use href="#sfl" x="1175.2" y="343.3"/>
<use href="#sfl" x="1241.6" y="397.8"/>
<use href="#sfl" x="1204.1" y="554.6"/>
<use href="#sfl" x="1300" y="574.2"/>
<use href="#sfl" x="1176.4" y="615.9"/>
<use href="#sfl" x="1243.3" y="609.3"/>
<use href="#sfl" x="1113.2" y="637"/>
<use href="#r8" x="828.6" y="208.9"/>
<use href="#r8" x="975.1" y="281.6"/>
<use href="#r8" x="1071.7" y="212.3"/>
<use href="#r8" x="1083.8" y="329.9"/>
<use href="#r8" x="1260.9" y="306.6"/>
<use href="#r8" x="928.1" y="390.3"/>
<use href="#r8" x="830.8" y="457.8"/>
<use href="#r8" x="940.8" y="508.4"/>
<use href="#r8" x="1038.1" y="438.8"/>
<use href="#r8" x="1156.4" y="434"/>
<use href="#r8" x="1112.2" y="543.8"/>
<use href="#r8" x="1267.9" y="487.7"/>
<use href="#r8" x="902.7" y="621"/>
<use href="#r8" x="1021.8" y="621.1"/>
<use href="#r8" x="962" y="723.9"/>
<use href="#r8" x="843.2" y="724"/>
<use href="#r8" x="1081" y="723.9"/>
<use href="#r8" x="326.8" y="660.8"/>
<use href="#r8" x="426.9" y="724.2"/>
<use href="#rg" x="1124.4" y="149.6"/>
<use href="#rg" x="1190.6" y="149.6"/>
<use href="#rg" x="1258" y="149.6"/>
<use href="#rg" x="1131.4" y="186.7"/>
<use href="#rg" x="1198.2" y="186.7"/>
<use href="#rg" x="657" y="748.2"/>
<use href="#rg" x="724.2" y="748.2"/>
<use href="#rg" x="1191.4" y="711.8"/>
<use href="#rg" x="1192.8" y="748.2"/>
<use href="#rg" x="1260" y="748.2"/>
<use href="#cg" x="731.8" y="334.7"/>
<use href="#cg" x="596.4" y="436.7"/>
<use href="#cg" x="463.5" y="542.5"/>
<use href="#cg" x="761.9" y="547"/>
<use href="#cg" x="629.2" y="653.7"/>
<use href="#cg" transform="translate(682.9 383.6) rotate(180)"/>
<use href="#cg" transform="translate(546.4 486.4) rotate(180)"/>
<use href="#cg" transform="translate(406.6 586) rotate(180)"/>
<use href="#cg" transform="translate(712.7 597) rotate(180)"/>
<use href="#cg" transform="translate(571.7 697.6) rotate(180)"/>
</g></svg>
<div class="a" style="left:0;top:821px;width:1918px;height:128px;background:#8c8c8c"></div>
<div class="a" style="left:0;top:821px;width:1916px;height:128px;background:#a0a0c0;border-top:3px solid #fff;border-left:1px solid #f0f0e8;border-right:1px solid #fff"></div>
<div class="a" style="left:1917px;top:795px;width:1px;height:26px;background:#8c5a50"></div>
<div class="b " style="left:7px;top:825px;width:40px;height:25px;"><span class="lat">W-</span></div>
<div class="b " style="left:52px;top:825px;width:46px;height:30px;"><span class="lat">Y+</span></div>
<div class="b " style="left:103px;top:825px;width:40px;height:25px;"><span class="lat">Z-</span></div>
<div class="b " style="left:5px;top:854px;width:46px;height:30px;"><span class="lat">X-</span></div>
<div class="a" style="left:52px;top:861px;width:44px;height:17px;background:#fff;border:1px solid #e0e0f4;font-family:'Liberation Sans',sans-serif;font-size:11px;line-height:15px;text-align:center">500</div>
<div class="b " style="left:97px;top:854px;width:46px;height:30px;"><span class="lat">X+</span></div>
<div class="b " style="left:7px;top:888px;width:40px;height:25px;"><span class="lat">W+</span></div>
<div class="b " style="left:52px;top:884px;width:46px;height:30px;"><span class="lat">Y-</span></div>
<div class="b " style="left:103px;top:888px;width:40px;height:25px;"><span class="lat">Z+</span></div>
<div class="b " style="left:146px;top:830px;width:36px;height:54px;">快慢</div>
<div class="b " style="left:190px;top:825px;width:88px;height:30px;">单页连版</div>
<div class="b " style="left:191px;top:861px;width:42px;height:26px;"><span class="lat">[ Y+ ]</span></div>
<div class="b " style="left:238px;top:860px;width:40px;height:26px;">夹子</div>
<div class="b " style="left:146px;top:890px;width:42px;height:27px;"><span class="lat">[ X- ]</span></div>
<div class="b " style="left:191px;top:890px;width:42px;height:27px;"><span class="lat">[ Y- ]</span></div>
<div class="b " style="left:236px;top:890px;width:42px;height:27px;"><span class="lat">[ X+ ]</span></div>
<div class="a" style="left:289px;top:829px;width:59px;height:35px;border:2px solid #f4f4fa;box-shadow:1px 1px 0 #7c7c9c, inset 1px 1px 0 #8c8cac;background:#a0a0c0"></div>
<div class="a" style="left:293px;top:842px;width:11px;height:11px;border-radius:50%;border:1px solid #6a7a8c;background:radial-gradient(circle at 40% 40%,#fff,#d8dce4)"><div class="a" style="left:2px;top:2px;width:5px;height:5px;border-radius:50%;background:radial-gradient(circle at 35% 35%,#9fe0ff,#1c6ea8 70%)"></div></div>
<div class="a lat" style="left:308px;top:842px;line-height:12px;white-space:pre;font-weight:bold">head 1</div>
<div class="a" style="left:289px;top:874px;width:59px;height:35px;border:2px solid #f4f4fa;box-shadow:1px 1px 0 #7c7c9c, inset 1px 1px 0 #8c8cac;background:#a0a0c0"></div>
<div class="a" style="left:293px;top:887px;width:11px;height:11px;border-radius:50%;border:1px solid #6a7a8c;background:radial-gradient(circle at 40% 40%,#fff,#d8dce4)"></div>
<div class="a lat" style="left:308px;top:887px;line-height:12px;white-space:pre;font-weight:bold">head 2</div>
<div class="b " style="left:353px;top:825px;width:61px;height:30px;">定零点</div>
<div class="b " style="left:353px;top:857px;width:61px;height:30px;">吸风</div>
<div class="b " style="left:353px;top:888px;width:61px;height:30px;">到定位点</div>
<div class="b " style="left:418px;top:825px;width:61px;height:30px;">走边框</div>
<div class="b " style="left:418px;top:857px;width:61px;height:30px;">到零点</div>
<div class="b " style="left:418px;top:888px;width:61px;height:30px;">回原点</div>
<div class="b " style="left:485px;top:825px;width:63px;height:30px;">发送<span class="lat">1</span></div>
<div class="b " style="left:485px;top:857px;width:63px;height:30px;">发送<span class="lat">2</span></div>
<div class="b " style="left:485px;top:888px;width:63px;height:30px;">发送<span class="lat">12</span></div>
<div class="b " style="left:553px;top:825px;width:75px;height:30px;"><span class="lat">1 </span>重复<span class="lat">/</span>加工</div>
<div class="b " style="left:553px;top:857px;width:75px;height:30px;"><span class="lat">2 </span>重复<span class="lat">/</span>加工</div>
<div class="b " style="left:553px;top:888px;width:75px;height:30px;"><span class="lat">12</span>重复<span class="lat">/</span>加工</div>
<div class="b " style="left:632px;top:825px;width:57px;height:30px;"><span class="lat">1 </span>取消</div>
<div class="b " style="left:632px;top:857px;width:57px;height:30px;"><span class="lat">2 </span>取消</div>
<div class="b " style="left:632px;top:888px;width:57px;height:30px;"><span class="lat">12</span>取消</div>
<div class="b " style="left:694px;top:825px;width:60px;height:30px;"><span class="lat">1 </span>暂停</div>
<div class="b " style="left:694px;top:857px;width:60px;height:30px;"><span class="lat">2 </span>暂停</div>
<div class="b " style="left:694px;top:888px;width:60px;height:30px;"><span class="lat">12</span>暂停</div>
<div class="b " style="left:763px;top:825px;width:73px;height:30px;">一直重复</div>
<div class="b " style="left:842px;top:825px;width:67px;height:33px;">优化</div>
<div class="b dis" style="left:763px;top:857px;width:73px;height:30px;">拉料</div>
</body></html>
